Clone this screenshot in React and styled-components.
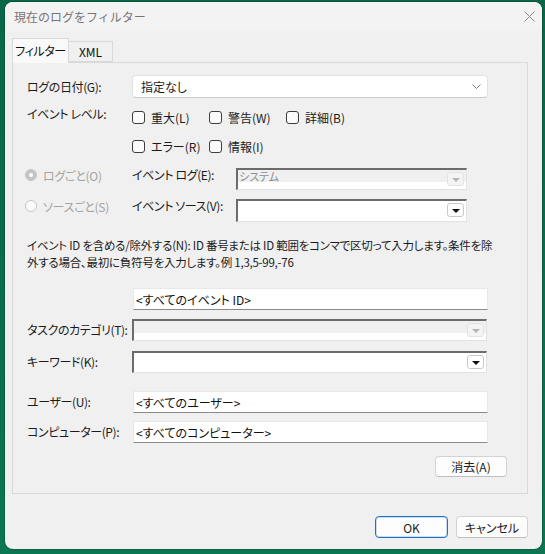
import styled, { createGlobalStyle } from 'styled-components'

const GlobalStyle = createGlobalStyle`
  html, body {
    margin: 0;
    padding: 0;
  }
  body {
    width: 545px;
    height: 554px;
    overflow: hidden;
    background: linear-gradient(180deg, #0a6648 0%, #0b6e4e 60%, #0b7652 100%);
    font-family: "Noto Sans CJK JP", "Noto Sans", sans-serif;
    font-size: 12px;
    font-feature-settings: "palt";
    color: #1b1b1b;
  }
`

const Dialog = styled.div`
  margin: 2px 3px 5px 5px;
  width: 537px;
  height: 547px;
  box-sizing: border-box;
  border-radius: 8px;
  background: #f0f0f0;
  box-shadow: 0 0 0 1px rgba(0, 0, 0, 0.18);
  overflow: hidden;
  display: flex;
  flex-direction: column;
`

const TitleBar = styled.div`
  height: 29px;
  flex: none;
  background: #f3f3f3;
  display: flex;
  align-items: center;
  justify-content: space-between;
  padding: 0 7px 0 9px;
`

const Title = styled.span`
  color: #767676;
  font-size: 12px;
  font-feature-settings: normal;
`

const Body = styled.div`
  flex: 1;
  display: flex;
  flex-direction: column;
  padding: 6px 14px 0 7px;
`

const Tabs = styled.div`
  display: flex;
  align-items: flex-end;
  height: 25px;
`

const Tab = styled.div`
  box-sizing: border-box;
  width: ${p => p.$w}px;
  height: ${p => (p.$active ? 25 : 21)}px;
  margin-bottom: ${p => (p.$active ? -1 : 0)}px;
  position: relative;
  z-index: ${p => (p.$active ? 1 : 0)};
  border: 1px solid #d9d9d9;
  border-left: ${p => (p.$active ? '1px solid #d9d9d9' : 'none')};
  border-bottom: ${p => (p.$active ? 'none' : '1px solid #d9d9d9')};
  background: ${p => (p.$active ? '#f9f9f9' : '#f0f0f0')};
  display: flex;
  align-items: center;
  justify-content: center;
  padding-bottom: ${p => (p.$active ? 2 : 0)}px;
  letter-spacing: ${p => (p.$active ? '-0.4px' : '0')};
  color: #111;
`

const Panel = styled.div`
  box-sizing: border-box;
  height: 432px;
  border: 1px solid #d9d9d9;
  background: #f0f0f0;
  padding: 0 14px;
  display: flex;
  flex-direction: column;
`

const FieldRow = styled.div`
  display: grid;
  grid-template-columns: 105px auto;
  align-items: center;
  margin-top: ${p => p.$top || 0}px;
`

const Label = styled.span`
  color: ${p => (p.$disabled ? '#a3a3a3' : '#1b1b1b')};
  white-space: nowrap;
  line-height: 14px;
  letter-spacing: -0.4px;
`

const DateSelect = styled.div`
  box-sizing: border-box;
  width: 356px;
  height: 23px;
  background: #fff;
  border: 1px solid #e2e2e2;
  border-bottom-color: #c9c9c9;
  border-radius: 4px;
  display: flex;
  align-items: center;
  justify-content: space-between;
  padding: 0 6px 0 8px;
`

const LevelRow = styled.div`
  display: grid;
  grid-template-columns: 105px auto;
  margin-top: 9px;
`

const CheckGrid = styled.div`
  display: grid;
  grid-template-columns: repeat(3, 77px);
  grid-auto-rows: 20px;
  row-gap: 9px;
`

const CheckItem = styled.label`
  display: flex;
  align-items: center;
  gap: 6px;
  white-space: nowrap;
`

const CheckBox = styled.span`
  box-sizing: border-box;
  width: 13px;
  height: 13px;
  border: 1px solid #3d3d3d;
  border-radius: 3px;
  background: #fbfbfb;
`

const SourceGrid = styled.div`
  display: grid;
  grid-template-columns: 107px 104px 231px;
  grid-template-rows: 22px 23px;
  row-gap: 9px;
  margin: 12px 0 0 -2px;
`

const RadioItem = styled.div`
  display: flex;
  align-items: center;
  gap: 6px;
  align-self: start;
  height: 14px;
  color: #a3a3a3;
  letter-spacing: -0.3px;
  white-space: nowrap;
`

const Radio = styled.span`
  box-sizing: border-box;
  width: 12px;
  height: 12px;
  border-radius: 50%;
  border: 1px solid #c6c6c6;
  background: ${p => (p.$checked ? '#c4c4c4' : '#fbfbfb')};
  display: flex;
  align-items: center;
  justify-content: center;
  &::after {
    content: '';
    display: ${p => (p.$checked ? 'block' : 'none')};
    width: 4px;
    height: 4px;
    border-radius: 50%;
    background: #fff;
  }
`

const Combo = styled.div`
  box-sizing: border-box;
  width: ${p => p.$w}px;
  height: ${p => p.$h || 22}px;
  border-top: 2px solid #6c6c6c;
  border-left: 2px solid #6c6c6c;
  border-right: 1px solid #e2e2e2;
  border-bottom: 1px solid #e2e2e2;
  background: ${p =>
    p.$disabled ? 'linear-gradient(180deg, #f0f0f0 0 12px, #ffffff 12px)' : '#fff'};
  display: flex;
  justify-content: space-between;
  align-items: flex-start;
  padding: 0 2px 0 0;
`

const ComboText = styled.span`
  color: #8d8d8d;
  font-size: 11px;
  line-height: 12px;
  padding-left: 1px;
`

const ComboButton = styled.span`
  box-sizing: border-box;
  width: 17px;
  height: 14px;
  margin-top: 2px;
  border: 1px solid ${p => (p.$disabled ? '#e3e3e3' : '#c9c9c9')};
  border-radius: 3px;
  background: ${p => (p.$disabled ? '#f4f4f4' : '#fff')};
  display: flex;
  align-items: center;
  justify-content: center;
  &::after {
    content: '';
    width: 0;
    height: 0;
    border-left: 4px solid transparent;
    border-right: 4px solid transparent;
    border-top: 4px solid ${p => (p.$disabled ? '#b5b5b5' : '#111')};
    margin-top: 1px;
  }
`

const Description = styled.p`
  margin: 15px 0 0;
  font-size: 11.5px;
  letter-spacing: -0.25px;
  line-height: 17px;
  color: #1b1b1b;
  white-space: nowrap;
`

const TextBox = styled.div`
  box-sizing: border-box;
  width: 355px;
  height: 22px;
  margin-left: 1px;
  background: #fff;
  border: 1px solid #e8e8e8;
  border-bottom: 1px solid #8a8a8a;
  display: flex;
  align-items: center;
  padding-left: 2px;
  color: #111;
`

const Button = styled.button`
  box-sizing: border-box;
  width: ${p => p.$w}px;
  height: ${p => p.$h || 22}px;
  font: inherit;
  font-size: 12px;
  color: #1b1b1b;
  background: #fdfdfd;
  border: 1px solid ${p => (p.$primary ? '#1f6fc5' : '#d3d3d3')};
  border-bottom-color: ${p => (p.$primary ? '#1f6fc5' : '#bdbdbd')};
  box-shadow: ${p => (p.$primary ? 'inset 0 0 0 1px #c9def4' : 'none')};
  border-radius: 4px;
  padding: 0;
`

const ClearRow = styled.div`
  display: flex;
  justify-content: flex-end;
  margin: 13px 6px 0 0;
`

const Footer = styled.div`
  display: flex;
  justify-content: flex-end;
  gap: 8px;
  padding-top: 22px;
`

const CloseIcon = () => (
  <svg width="11" height="11" viewBox="0 0 11 11">
    <path d="M0.5 0.5 L10.5 10.5 M10.5 0.5 L0.5 10.5" stroke="#8a8a8a" strokeWidth="1" fill="none" />
  </svg>
)

const Chevron = () => (
  <svg width="9" height="5" viewBox="0 0 9 5">
    <path d="M0.5 0.5 L4.5 4.5 L8.5 0.5" stroke="#7a7a7a" strokeWidth="1" fill="none" />
  </svg>
)

const levels = ['重大(L)', '警告(W)', '詳細(B)', 'エラー(R)', '情報(I)']

export default function App() {
  return (
    <>
      <GlobalStyle />
      <Dialog>
        <TitleBar>
          <Title>現在のログをフィルター</Title>
          <CloseIcon />
        </TitleBar>
        <Body>
          <Tabs>
            <Tab $active $w={57}>フィルター</Tab>
            <Tab $w={44}>XML</Tab>
          </Tabs>
          <Panel>
            <FieldRow $top={12}>
              <Label>ログの日付(G):</Label>
              <DateSelect>
                <span>指定なし</span>
                <Chevron />
              </DateSelect>
            </FieldRow>

            <LevelRow>
              <Label>イベント レベル:</Label>
              <CheckGrid>
                {levels.map(l => (
                  <CheckItem key={l}>
                    <CheckBox />
                    {l}
                  </CheckItem>
                ))}
              </CheckGrid>
            </LevelRow>

            <SourceGrid>
              <RadioItem>
                <Radio $checked />
                ログごと(O)
              </RadioItem>
              <Label>イベント ログ(E):</Label>
              <Combo $w={231} $h={22} $disabled>
                <ComboText>システム</ComboText>
                <ComboButton $disabled />
              </Combo>
              <RadioItem>
                <Radio />
                ソースごと(S)
              </RadioItem>
              <Label>イベント ソース(V):</Label>
              <Combo $w={231} $h={23}>
                <span />
                <ComboButton />
              </Combo>
            </SourceGrid>

            <Description>
              イベント ID を含める/除外する(N): ID 番号または ID 範囲をコンマで区切って入力します。条件を除
              <br />
              外する場合、最初に負符号を入力します。例 1,3,5-99,-76
            </Description>

            <FieldRow $top={17}>
              <span />
              <TextBox>&lt;すべてのイベント ID&gt;</TextBox>
            </FieldRow>

            <FieldRow $top={9}>
              <Label>タスクのカテゴリ(T):</Label>
              <Combo $w={355} $disabled>
                <span />
                <ComboButton $disabled />
              </Combo>
            </FieldRow>

            <FieldRow $top={10}>
              <Label>キーワード(K):</Label>
              <Combo $w={355}>
                <span />
                <ComboButton />
              </Combo>
            </FieldRow>

            <FieldRow $top={18}>
              <Label>ユーザー(U):</Label>
              <TextBox>&lt;すべてのユーザー&gt;</TextBox>
            </FieldRow>

            <FieldRow $top={8}>
              <Label>コンピューター(P):</Label>
              <TextBox>&lt;すべてのコンピューター&gt;</TextBox>
            </FieldRow>

            <ClearRow>
              <Button $w={72} $h={21}>消去(A)</Button>
            </ClearRow>
          </Panel>
          <Footer>
            <Button $primary $w={73}>OK</Button>
            <Button $w={72}>キャンセル</Button>
          </Footer>
        </Body>
      </Dialog>
    </>
  )
}
